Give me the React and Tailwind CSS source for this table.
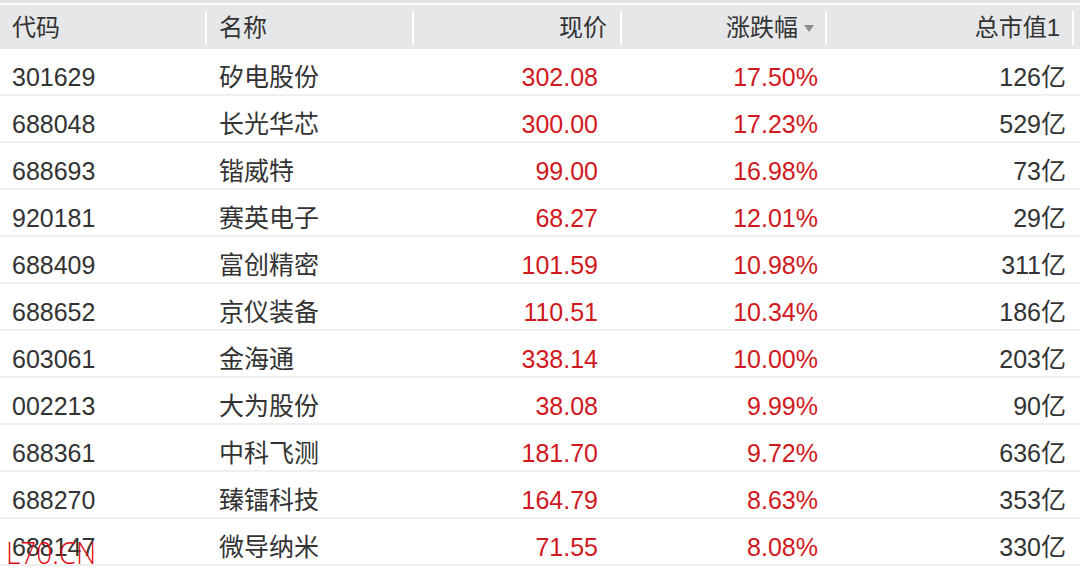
import React from 'react';

const rows = [
  ['301629', '矽电股份', '302.08', '17.50%', '126亿'],
  ['688048', '长光华芯', '300.00', '17.23%', '529亿'],
  ['688693', '锴威特', '99.00', '16.98%', '73亿'],
  ['920181', '赛英电子', '68.27', '12.01%', '29亿'],
  ['688409', '富创精密', '101.59', '10.98%', '311亿'],
  ['688652', '京仪装备', '110.51', '10.34%', '186亿'],
  ['603061', '金海通', '338.14', '10.00%', '203亿'],
  ['002213', '大为股份', '38.08', '9.99%', '90亿'],
  ['688361', '中科飞测', '181.70', '9.72%', '636亿'],
  ['688270', '臻镭科技', '164.79', '8.63%', '353亿'],
  ['688147', '微导纳米', '71.55', '8.08%', '330亿'],
];

const font = { fontFamily: '"Liberation Sans", "Noto Sans CJK SC", sans-serif' };

const Divider = () => <div className="w-[2px] h-[34px] bg-white" />;

export default function App() {
  return (
    <div className="relative w-[1080px] h-[577px] bg-white overflow-hidden text-[#333333]" style={font}>
      <div className="h-[3px] bg-[#e4e4e6]" />
      <div className="h-[2px] bg-white" />
      {/* header */}
      <div className="h-[44px] bg-[#e6e7e9] flex items-center text-[24px] leading-none pt-[1px]">
        <div className="w-[205px] pl-[12px]">代码</div>
        <Divider />
        <div className="w-[205px] pl-[12px]">名称</div>
        <Divider />
        <div className="w-[206px] pr-[13px] text-right">现价</div>
        <Divider />
        <div className="w-[203px] pr-[11px] flex items-center justify-end gap-[6px]">
          <span>涨跌幅</span>
          <span className="w-0 h-0 border-l-[5px] border-r-[5px] border-t-[7px] border-l-transparent border-r-transparent border-t-[#8c8c8c] mt-[1px]" />
        </div>
        <Divider />
        <div className="w-[245px] pr-[12px] text-right">总市值1</div>
        <Divider />
      </div>
      {rows.map((r) => (
        <div key={r[0]} className="h-[47px] flex items-center border-b-2 border-[#efeff1] text-[25px] leading-none pt-[12px]">
          <div className="w-[207px] pl-[12px]">{r[0]}</div>
          <div className="w-[207px] pl-[12px]">{r[1]}</div>
          <div className="w-[206px] pr-[22px] text-right text-[#d0191e]">{r[2]}</div>
          <div className="w-[205px] pr-[7px] text-right text-[#d0191e]">{r[3]}</div>
          <div className="w-[253px] pr-[12px] text-right">{r[4]}</div>
        </div>
      ))}
      <div className="absolute left-[6px] top-[537px] text-[31px] leading-none text-[#e00a12] font-light scale-x-90 origin-left" style={{ fontFamily: '"Open Sans", "Liberation Sans", sans-serif' }}>
        L70.CN
      </div>
    </div>
  );
}
